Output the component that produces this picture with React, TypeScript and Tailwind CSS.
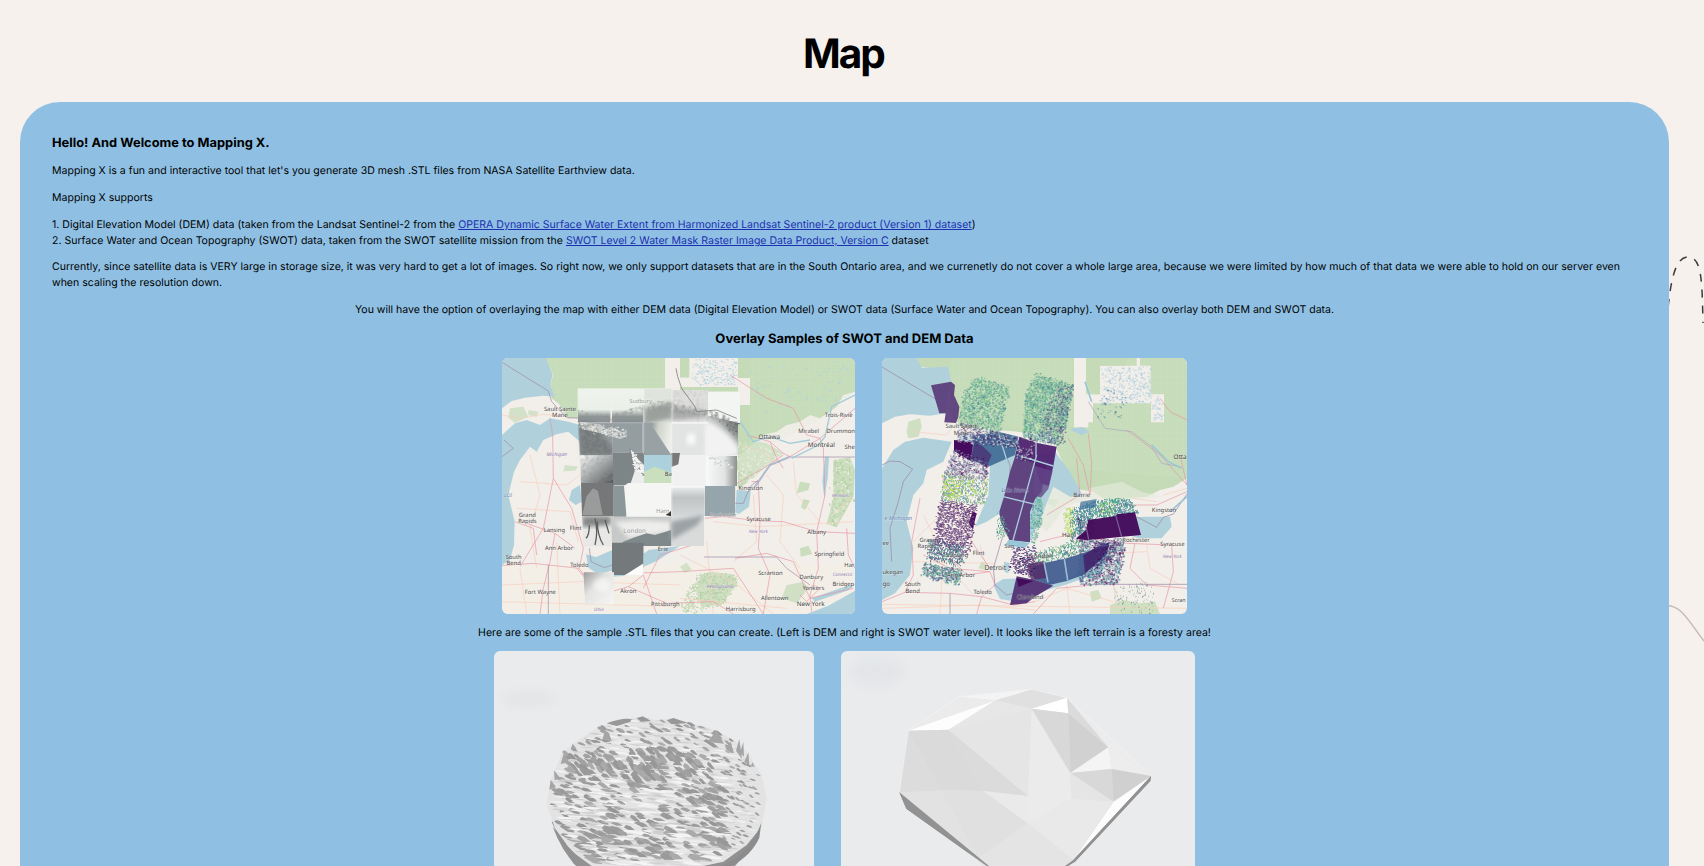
import React from "react";

type Pt = [number, number];

function rng(seed: number) {
  let s = seed;
  return () => {
    s = (s * 1664525 + 1013904223) % 4294967296;
    return s / 4294967296;
  };
}

const toPts = (s: string): Pt[] => s.split(" ").map((p) => p.split(",").map(Number) as Pt);

function inside(x: number, y: number, poly: Pt[]) {
  let hit = false;
  for (let i = 0, j = poly.length - 1; i < poly.length; j = i++) {
    const [xi, yi] = poly[i];
    const [xj, yj] = poly[j];
    if (yi > y !== yj > y && x < ((xj - xi) * (y - yi)) / (yj - yi) + xi) hit = !hit;
  }
  return hit;
}

/* Smooth pseudo-random field in the range -1..1. */
function field(x: number, y: number, f: number) {
  return (Math.sin(x * f + y * f * 0.6) + Math.sin(y * f * 1.7 - x * f * 0.5 + 1.3) + Math.sin((x + y) * f * 2.3 + 4)) / 3;
}

/* Scattered raster cells that fill a polygon with a given density. */
function Speckle({ area, colors, density, seed, size = 3 }: { area: string; colors: string[]; density: number; seed: number; size?: number }) {
  const poly = toPts(area);
  const xs = poly.map((p) => p[0]);
  const ys = poly.map((p) => p[1]);
  const r = rng(seed);
  const d: string[] = colors.map(() => "");
  for (let y = Math.min(...ys); y < Math.max(...ys); y += size) {
    for (let x = Math.min(...xs); x < Math.max(...xs); x += size) {
      const a = r();
      const b = r();
      const c = r();
      const jx = x + (r() - 0.5) * 9;
      const jy = y + (r() - 0.5) * 9;
      if (a < density * (1 + 0.3 * field(x, y, 0.07)) && inside(jx, jy, poly)) {
        const w = size * (b > 0.75 ? 1.8 : 1);
        const h = size * (c > 0.75 ? 1.8 : 1);
        d[Math.floor(b * 97) % colors.length] += `M${x} ${y}h${w}v${h}h${-w}z`;
      }
    }
  }
  return (
    <g opacity={0.8}>
      {d.map((p, i) => (
        <path key={i} d={p} fill={colors[i]} />
      ))}
    </g>
  );
}

type Label = [string, number, number, number?, string?];
function Labels({ items }: { items: Label[] }) {
  return (
    <g fontFamily="'Noto Sans', sans-serif" textAnchor="middle" stroke="#fff" strokeOpacity={0.35} strokeWidth={2.5} paintOrder="stroke">
      {items.map(([t, x, y, s, c]) => (
        <text key={t + x} x={x} y={y} fontSize={s ?? 17.5} fill={c ?? "#444"} fontStyle={c && c !== "#999" ? "italic" : "normal"}>
          {t}
        </text>
      ))}
    </g>
  );
}

function Roads({ major, minor }: { major: string[]; minor: string[] }) {
  return (
    <g fill="none" strokeLinejoin="round">
      {minor.map((p, i) => (
        <polyline key={i} points={p} stroke="#f7cfbd" strokeWidth={2} />
      ))}
      {major.map((p, i) => (
        <polyline key={i} points={p} stroke="#e892a2" strokeOpacity={0.75} strokeWidth={2.6} />
      ))}
    </g>
  );
}

const PURPLE = "#8d78ad";
const LAKE = "#6b87b8";

function DemMap() {
  return (
    <svg className="block h-[256px] w-[353px] rounded-md" viewBox="6 9 1059 768" preserveAspectRatio="none">
      <defs>
        <linearGradient id="dk" x1="0" y1="0" x2="1" y2="1"><stop offset="0" stopColor="#fbfbfb" /><stop offset=".5" stopColor="#a5a9aa" /><stop offset="1" stopColor="#505354" /></linearGradient>
        <linearGradient id="down" x1="0" y1="0" x2="0" y2="1"><stop offset="0" stopColor="#f1f2f2" /><stop offset=".4" stopColor="#bfc3c4" /><stop offset="1" stopColor="#d5d9da" /></linearGradient>
        <linearGradient id="side" x1="0" y1="0" x2="1" y2="0"><stop offset="0" stopColor="#f8f9f9" /><stop offset=".6" stopColor="#e1e4e3" /><stop offset="1" stopColor="#8b8f8e" /></linearGradient>
        <linearGradient id="sand" x1="0" y1="0" x2="1" y2="1"><stop offset="0" stopColor="#999" /><stop offset=".4" stopColor="#e3e3e2" /><stop offset="1" stopColor="#f6f6f4" /></linearGradient>
        <linearGradient id="band" x1="0" y1="0" x2="0" y2="1"><stop offset="0" stopColor="#eef3ec" /><stop offset=".6" stopColor="#eaf0e9" /><stop offset=".8" stopColor="#8e9595" /><stop offset="1" stopColor="#858d90" /></linearGradient>
        <linearGradient id="bay" x1="0" y1="0" x2="1" y2=".2"><stop offset=".3" stopColor="#98a1a3" /><stop offset=".55" stopColor="#cfd3cb" /><stop offset="1" stopColor="#eceee9" /></linearGradient>
        <linearGradient id="ne" x1="0" y1="1" x2="1" y2="0"><stop offset=".3" stopColor="#eeefee" /><stop offset=".6" stopColor="#b9bcbb" /><stop offset=".8" stopColor="#6f7372" /></linearGradient>
        <filter id="soft"><feGaussianBlur stdDeviation="6" /></filter>
        <filter id="grain" x="0" y="0" width="1" height="1"><feTurbulence type="fractalNoise" baseFrequency=".09" numOctaves="4" seed="4" /><feColorMatrix values="0 0 0 0 .3  0 0 0 0 .3  0 0 0 0 .3  1.8 0 0 0 -.72" /><feComposite in2="SourceGraphic" operator="in" /></filter>
        <pattern id="grid" width="7" height="7" patternUnits="userSpaceOnUse"><path d="M7 0H0V7" fill="none" stroke="#d5e4cb" strokeWidth="1" /></pattern>
        <clipPath id="tilesClip"><path d="M233 101H720V208H714V393H706V483H612V573H430V660H342V749H250V574L233 203z" /></clipPath>
      </defs>
      <path d="M6 9H1065V777H6z" fill="#f2eee9" />
      <path d="M6 630H1065V777H6z" fill="#f3efe5" opacity=".7" />
      <g fill="#c5dbb8">
        <path d="M135 9H568V68H540V100H233V190H205L178 148 155 130 150 90 160 60z" />
        <path d="M540 96H714V400L740 385 760 350 700 345 720 300 790 240 830 230 860 210 900 200 930 180 960 190 1010 155 1030 120 1065 110V9H714V69H750V150H720V110H540z" />
        <path d="M714 250L800 265 850 295 800 330 760 370 714 378z" opacity=".7" />
        <path d="M1000 315l50-8 15 40-5 80-50 90-30-10 20-80zM900 380l30 5-5 20-35 10zM910 432l20 5-15 28-12-8zM900 580l25-8 12 25-35 8z" opacity=".9" />
        <path d="M600 660l30-10 70 8 10 30-45 60-60 10-15-45zM860 690l50-10 15 20-35 45-45-15z" opacity=".75" />
        <path d="M195 330l40 5-10 12-35 2zM30 160l40-5 15 30-40 18-20-15zM540 635l20-12 15 20-20 12zM85 165l30 5-5 15-25-5z" opacity=".7" />
      </g>
      <Speckle area="1000,310 1050,305 1060,430 1010,520 975,505" colors={["#f2eee9", "#b3cfa4"]} density={0.22} seed={51} size={4} />
      <Speckle area="590,655 710,655 710,690 660,750 550,777 540,740" colors={["#b3cfa4", "#c5dbb8"]} density={0.35} seed={52} size={4} />
      <Speckle area="714,250 850,295 800,340 714,385" colors={["#f2eee9", "#d5e4c6"]} density={0.25} seed={53} size={4} />
      <path d="M135 9H495V190H200L150 100zM750 9H1065V110L950 200 750 300z" fill="url(#grid)" />
      <path d="M495 9H540V101H495zM540 68H570V96H540zM570 9H714V96H570zM714 69H750V150H714z" fill="#f2eee9" />
      <Speckle area="575,12 710,12 710,90 575,90" colors={["#aed0df", "#bdd8e3"]} density={0.22} seed={8} />
      <Speckle area="750,20 1060,20 1000,150 760,180" colors={["#aed3da"]} density={0.03} seed={18} size={4} />
      <g fill="#b0d1dc">
        <path d="M6 9H138L158 60 150 90 165 125 130 122 75 128 35 138 6 160z" />
        <path d="M6 240L45 205 80 195 120 210 150 190 205 200 240 210V260L205 230 170 238 130 255 110 290 90 275 60 315 42 350 25 420 44 500 42 570 30 615 6 630z" />
        <path d="M240 390l-25 15-8 30 20 15 18-10zM258 598l30 8 48-20 4 60-45 12-30-20zM336 665l110-80 94-12-70 45-100 45zM710 405l20 0 22 5-5 45-30 22-11-5zM975 305h12l-4 65-10 60-6-50zM920 777l65-25 80-45v70zM935 730l90-32 40-10-20 18-100 34z" />
      </g>
      <Roads
        minor={["6,180 60,190 130,178 200,185", "90,300 120,420 90,520 110,640", "60,380 200,390 240,360", "50,460 210,470", "640,500 780,515 1060,500", "760,420 770,560 700,620", "800,360 850,420 840,560 900,640", "880,320 890,420 960,500", "540,600 700,680 820,777", "6,690 240,680 540,690", "170,560 180,777", "60,640 80,777", "1000,480 1060,420", "620,560 640,777", "720,270 790,290 830,330", "210,470 235,560", "6,740 540,755", "540,730 860,760"]}
        major={["150,190 158,240 160,370 215,460 250,580 238,640", "160,370 130,520 60,635", "80,505 165,535 225,580", "6,632 100,625 238,640 250,660 540,650 700,640 790,777", "45,500 100,520 110,600", "165,535 150,620 130,700 120,777", "385,695 430,660 470,777", "385,695 300,720 230,640", "385,695 500,745 640,740 700,777", "430,700 480,600 612,560", "615,490 670,485 780,498 850,500 950,530 1065,535", "780,498 775,380 755,380", "780,498 775,580 810,660 790,777", "950,530 955,640 930,720 935,770", "950,530 975,420 970,280 960,250", "740,240 810,260 850,295 870,305 960,250 1065,160", "712,385 790,340 850,300", "690,60 800,130 880,160 920,240 960,250", "705,610 800,595 880,620 930,730 1060,700", "810,260 830,310 850,340", "900,720 920,740 960,700 940,690", "1040,520 1045,600 1065,640"]}
      />
      <g fill="none" stroke="#9b86a5" strokeWidth="3" opacity=".65">
        <path d="M6 22L145 108 155 140 200 188 260 190M6 305L40 280 12 255M868 306H1065M775 375L750 395 730 445H706M268 580l5 40 40 18 45-15 70-50M612 606H830L860 640 930 690M145 630V777" />
        <path d="M868 306L810 330 765 395" stroke="#8c9fc0" strokeWidth="6" />
      </g>
      <path d="M1065 120l-70 35-20 90-20 25-80 40M720 200l40 60 50-15 60 20 60-10" fill="none" stroke="#a1cbd9" strokeWidth="4" />

      <g clipPath="url(#tilesClip)">
        <path d="M233 101H331V203H233zM336 101H430V205H336z" fill="url(#band)" />
        <path d="M432 101H516V203H432z" fill="#dfe5dd" /><path d="M432 160l84-20v50l-84 20z" fill="#9ba09d" filter="url(#soft)" />
        <path d="M236 203H338V301H241z" fill="#969ea1" />
        <path d="M236 203h40l62 75v23H241z" fill="#707576" opacity=".85" filter="url(#soft)" />
        <path d="M338 203H430V293H338z" fill="#949da0" />
        <path d="M430 203H514V300H430z" fill="url(#bay)" /><path d="M430 203h20l64 97h-84z" fill="#98a1a4" />
        <path d="M241 301H339V384H243z" fill="url(#dk)" />
        <path d="M339 293H434V391H339z" fill="#7e8587" />
        <path d="M392 282l22 30 20 20v62h-45l15-45z" fill="#ececec" />
        <path d="M243 384H341V484H245z" fill="#757778" />
        <path d="M247 480l12-55 20-25 15 8 14 72z" fill="#a4a4a4" opacity=".8" />
        <path d="M340 392H380V485H341z" fill="#8c979a" />
        <path d="M372 392L385 384H516V490H380z" fill="#f5f6f3" />
        <path d="M247 484H333V574H247z" fill="#e8e8e7" /><path d="M247 484h86v25l-86 8z" fill="#848686" filter="url(#soft)" />
        <path d="M285 490q10 40 0 80M292 500q0 40 18 70M268 510q0 30-10 40M315 495l12 40" fill="none" stroke="#5c5e5e" strokeWidth="4" />
        <path d="M333 485H516V573H336z" fill="#c6c9c8" /><path d="M345 500l80-5 90 5v30l-130 20z" fill="#ededeb" filter="url(#soft)" />
        <path d="M338 592L370 560 400 548 440 535 465 540 514 525V573H432V600H336z" fill="#7f898c" />
        <path d="M336 563H431V640L375 660H336z" fill="#74797b" /><path d="M431 625V660H375z" fill="#fbfbfa" />
        <path d="M250 652H342V749H256z" fill="url(#sand)" />
        <ellipse cx="305" cy="690" rx="24" ry="20" fill="#fff" opacity=".5" filter="url(#soft)" />
        <path d="M516 105H624V205H516z" fill="#dfdfde" /><path d="M516 150l108 20v15l-108 10z" fill="#a9acab" filter="url(#soft)" />
        <path d="M624 110H720V208H624z" fill="#f2f5f1" />
        <path d="M516 205H624V300H516z" fill="#e2e3e3" />
        <ellipse cx="573" cy="252" rx="14" ry="18" fill="#fafafa" filter="url(#soft)" />
        <path d="M616 180L720 205V300H616z" fill="url(#ne)" />
        <path d="M616 200q50 10 98 75v25h-98z" fill="#f1f2f1" filter="url(#soft)" />
        <path d="M514 300H618V395H514z" fill="#f0f1f0" /><path d="M514 294h26l-5 34-21 8z" fill="#77797a" />
        <path d="M618 303H711V393H618z" fill="url(#side)" />
        <path d="M514 390H614V485H514z" fill="url(#down)" /><path d="M615 393H706V483H615z" fill="#95a5ab" />
        <path d="M514 484H612V573H514z" fill="#d9dbdb" /><path d="M514 500l98-20-20 30-78 45z" fill="#9ca2a5" filter="url(#soft)" />
        <path d="M432 300H514V384H432z" fill="#c9dfbd" /><path d="M432 300H514V352L490 345 465 335 432 350z" fill="#acd0dc" />
        <path d="M233 160q60 30 120 12t120-35q60 5 110 20t130 38v12q-60-22-130-28t-110-12-110 30-130-15z" fill="#4c5253" filter="url(#grain)" />
        <path d="M236 203H339V384H243z" fill="#555" filter="url(#grain)" opacity=".6" />
        <path d="M516 105H624V200H516z" fill="#777" filter="url(#grain)" opacity=".25" />
        <path d="M624 165q60 10 96 45v40q-40-50-96-60z" fill="#555" filter="url(#grain)" />
        <path d="M240 200l60 8 20 15 30-8 8 18 22-5v18l-20 6-60-18-55-12z" fill="#dde0dc" opacity=".7" />
        <Speckle area="235,203 380,220 375,250 290,235 235,215" colors={["#848a8a", "#f6f6f4"]} density={0.3} seed={5} />
        <Speckle area="385,282 410,300 432,360 405,350" colors={["#777d7d", "#fff"]} density={0.25} seed={6} />
        <Speckle area="655,190 720,205 712,240 675,225" colors={["#5d6160", "#8e9190"]} density={0.22} seed={7} />
        <Speckle area="620,305 680,310 700,340 640,325" colors={["#b8beba", "#fff"]} density={0.25} seed={9} />
        <path d="M516 203H624M512 395H614" stroke="#fff" strokeWidth="6" opacity=".6" />
      </g>
      <path d="M234 203H430M334 101V203M431 101V300M428 203V290M516 105V484" stroke="#fff" strokeWidth="4" opacity=".25" fill="none" />
      <path d="M528 40l5 25 12 35 40 55 5 15M590 170l60-5 60 25" stroke="#7e7a80" strokeWidth="3" fill="none" opacity=".8" />
      <path d="M497 480l16-12v16z" fill="#333" />
      <Labels
        items={[["Sault Sainte", 180, 168], ["Marie", 180, 186], ["Sudbury", 422, 144, 17, "#999"], ["Michigan", 170, 302, 15, PURPLE], ["Grand", 82, 487], ["Rapids", 82, 505], ["Lansing", 163, 530], ["Flint", 227, 524], ["Ann Arbor", 177, 586], ["South", 41, 613], ["Bend", 41, 631], ["Toledo", 238, 636], ["Fort Wayne", 121, 716], ["Akron", 385, 714], ["Pittsburgh", 496, 753], ["London", 404, 533, 19, "#999"], ["Erie", 489, 588], ["Ba", 505, 363], ["Ham", 488, 475, 18, "#999"], ["Ohio", 297, 769, 14, PURPLE], ["Ottawa", 808, 253, 19], ["Mirabel", 926, 234], ["Montréal", 964, 277, 19], ["Drummon", 1022, 234], ["Trois-Riviè", 1016, 186], ["She", 1049, 283], ["Kingston", 752, 404], ["Rochester", 670, 487, 17, "#999"], ["Syracuse", 776, 498], ["New York", 775, 535, 14, PURPLE], ["Albany", 950, 538], ["Vermont", 1022, 426, 14, PURPLE], ["Springfield", 988, 604], ["Har", 1048, 637], ["Connectic", 1028, 662, 14, PURPLE], ["Scranton", 811, 660], ["Danbury", 934, 673], ["Yonkers", 940, 705], ["Bridgep", 1030, 694], ["Allentown", 824, 736], ["New York", 932, 754, 19], ["Harrisburg", 722, 769], ["Pennsylvania", 661, 698, 14, PURPLE], ["LOI", 24, 427, 16, LAKE]]}
      />
    </svg>
  );
}

const GREENS = ["#3f9b8b", "#5fb58a", "#35798c", "#7cc488", "#6aa79c"];
const DARKS = ["#440154", "#4b2a6b", "#5c3d7c", "#3e4c84"];
const MIX = ["#440154", "#3b528b", "#21918c", "#4b2a6b", "#7e9aa6"];

function SwotMap() {
  return (
    <svg className="block h-[256px] w-[305px] rounded-md" viewBox="6 9 915 768" preserveAspectRatio="none">
      <path d="M6 9H921V777H6z" fill="#f2eee9" />
      <g fill="#c5dbb8">
        <path d="M110 9H921V370L880 395 840 405 800 425 740 430 700 450 640 410 575 400 560 350 530 280 520 240 465 235 240 215 215 170 205 45 120 35z" />
        <path d="M85 200l35-10 5 25-10 30-30 5-5-20zM630 710l25-5 10 25-30 10zM690 750l40-15 50 10 45-5 15 37H690zM505 430l30 5-10 20-20-8zM305 620l15 5-5 20-20-5z" opacity=".8" />
      </g>
      <path d="M210 9H921V370L560 340 465 235 215 170z" fill="url(#grid)" />
      <path d="M582 9H618V118H660V32H780V9H770V32H812V118H852V202H813V145H639V202H625V217H582z" fill="#f2eee9" />
      <path d="M618 9h120v23h-78v86h-25l-17-40z" fill="#c5dbb8" />
      <path d="M530 300L590 410 640 425 600 440 560 450 500 530 465 500V380l40-80z" fill="#e3e8da" opacity=".75" />
      <path d="M625 400l100-20 60 30 60 15-100 10-110 10z" fill="#e6ebdc" opacity=".6" />
      <g fill="#b0d1dc">
        <path d="M6 9H110L125 38 205 35 213 80 195 175 150 182 90 178 45 185 6 205z" />
        <path d="M6 340L40 285 75 260 130 248 215 260 190 320 140 345 130 385 100 420 80 500 100 580 90 660 45 715 6 735z" />
        <path d="M240 240L360 245 465 300 525 290 570 350 610 425 570 425 520 395 490 470 450 560 400 560 360 475 320 500 285 515 325 420 330 330 250 300z" />
        <path d="M340 690l30-18 50-2 10 40-20 30-50-8zM465 690l100-20 120-70-20 50-110 40-90 25zM700 490l100-5 70 0 5 30-30 35-70 0-60-20zM568 222l40-6 20 15-25 10z" />
        <path d="M372 620l18 5-5 30-12-5z" />
      </g>
      <Speckle area="662,35 810,35 810,118 840,120 850,200 815,200 810,145 662,145" colors={["#9cc6dc", "#b7d3e0"]} density={0.18} seed={21} />
      <Roads
        minor={["100,560 190,470 190,380", "100,620 340,625 345,640", "130,480 190,600 180,777", "300,570 320,640", "560,600 800,590", "800,570 810,640 900,690", "465,740 560,700 700,740", "850,420 921,400", "6,760 300,750 465,765", "210,640 280,720", "700,680 710,777", "760,430 830,440", "100,230 200,240 215,220", "560,690 570,777", "6,748 921,760"]}
        major={["120,430 95,560 100,660 75,712 6,740", "75,712 210,715 305,725 400,750 465,740", "185,360 250,520 295,590 330,640", "200,600 260,660 330,650 345,690 305,725", "130,600 210,640 330,650", "305,725 290,777", "590,310 600,420 500,480", "565,250 610,330 630,420", "625,235 635,325 630,420", "590,560 640,550 740,565 875,570", "765,565 750,640 800,690 921,700", "875,570 880,650 850,760", "740,225 840,300 921,390 900,300", "840,130 870,170 921,195", "700,450 830,450 921,410", "480,560 560,540 600,560", "460,777 530,700 640,690"]}
      />
      <g fill="none" stroke="#9b86a5" strokeWidth="3" opacity=".7">
        <path d="M6 36L205 155 225 190M355 245L390 330 390 470 340 640 345 690 380 720 465 700M6 330L30 318 60 320 98 342 70 380 55 440 30 520 35 620M770 485l60 32 20-30 30-10 41-60M600 688H921M210 715V777" />
        <path d="M625 140l50 80 80 10 60 45 30 50 55 10" stroke="#a9a7c2" />
      </g>
      <path d="M615 80l20 60M921 425L870 470M815 270l50 50 40 20" stroke="#9cc5d6" strokeWidth="5" fill="none" />
      <Speckle area="455,350 488,360 485,500 460,570 448,560" colors={GREENS} density={0.45} seed={17} />

      <path d="M153 91L213 80 225 90 222 120 238 155 235 185 228 204 193 202 197 175 178 175z" fill="#5e427d" opacity=".96" />
      <path d="M280 240L360 232 415 245 405 300 325 335 275 310z" fill="#3a648f" opacity=".85" />
      <path d="M222 255L280 262 272 318 222 288z" fill="#460b5f" /><path d="M284 262L310 275 335 300 320 335 272 312z" fill="#4a3f7c" />
      <path d="M405 305L468 315 500 330 484 410 465 432 450 470V562L388 555 362 500 358 470 372 425 390 350z" fill="#5f4480" />
      <path d="M405 305l13-60 50 18 62 12-10 58-14 60-26-10-18-60z" fill="#4f2270" opacity=".95" />
      <path d="M462 332l56 16-13 54-22 26-24-10z" fill="#64488a" opacity=".75" />
      <path d="M370 425L465 448M470 300L395 570M410 300l110 33M355 235l30 95M468 260v50" stroke="#a9cbdc" strokeWidth="4" fill="none" />
      <path d="M385 555l65 8-15 15-60-5z" fill="#96c6d8" />
      <path d="M278 470l12 5-12 48-12-20z" fill="#470c62" />

      <Speckle area="282,62 390,95 355,240 238,205 245,120" colors={GREENS} density={0.42} seed={1} />
      <Speckle area="465,55 580,90 555,205 530,265 425,250 435,120" colors={GREENS} density={0.52} seed={2} />
      <Speckle area="540,80 580,90 545,270 470,260 490,180" colors={["#4a3f7b", "#3b6b8b", "#8a7aa2"]} density={0.25} seed={31} />
      <Speckle area="235,200 300,215 415,250 410,320 460,310 440,220 465,250 460,280 230,262" colors={[...DARKS, "#d5e6cf", "#eeeeea"]} density={0.5} seed={3} />
      <Speckle area="222,280 325,320 325,375 190,360" colors={["#440154", "#55658f", "#8a94ae"]} density={0.45} seed={4} />
      <Speckle area="190,355 325,370 310,450 180,440" colors={["#8ed645", "#3a9a8d", "#8591ae", "#8b8bae", "#a5d07c"]} density={0.42} seed={11} />
      <Speckle area="195,365 240,360 245,425 185,430" colors={["#8ed645", "#c9e04a"]} density={0.22} seed={41} />
      <Speckle area="180,435 290,450 265,600 155,560" colors={["#4b1860", "#5b2b6b", "#75588a"]} density={0.5} seed={12} />
      <Speckle area="145,550 250,570 245,632 138,610" colors={["#3c4d82", "#2b7c8c", "#5aa393", "#584078"]} density={0.55} seed={13} />
      <Speckle area="128,622 245,645 235,690 122,662" colors={["#31827e", "#46a87d", "#3c4d82"]} density={0.55} seed={14} />
      <Speckle area="355,470 385,520 385,555 345,545" colors={GREENS} density={0.36} seed={15} />
      <Speckle area="398,575 465,570 475,640 465,665 385,640" colors={DARKS} density={0.35} seed={16} />
      <Speckle area="570,465 650,435 745,430 780,475 620,495 570,560" colors={["#41a77d", "#2d9b8e", "#2d708e", "#3b6e8c"]} density={0.52} seed={19} />
      <Speckle area="552,455 575,455 580,500 570,560 550,500" colors={["#dce63f", "#b5dd4b", "#8fc97c"]} density={0.45} seed={20} />
      <Speckle area="650,440 700,440 700,478 660,480" colors={["#7ad151", "#b5dd4b"]} density={0.2} seed={43} />
      <Speckle area="595,490 640,490 635,540 590,555" colors={MIX} density={0.5} seed={22} />
      <Speckle area="470,590 600,550 620,580 560,610 465,630" colors={["#3b9f87", "#5fb58a", "#3b6e8c", "#9cc08c"]} density={0.4} seed={23} />
      <Speckle area="600,550 735,550 725,640 710,685 600,690 590,650" colors={MIX} density={0.46} seed={24} />
      <Speckle area="690,690 810,680 830,777 720,777" colors={["#b8ceb0", "#8c99a5"]} density={0.1} seed={25} />
      <Speckle area="660,100 740,110 740,190 650,190" colors={["#3e7598", "#7da6b5"]} density={0.07} seed={26} />

      <path d="M602 440l48-8-5 25-48 8z" fill="#3b6e9a" opacity=".7" />
      <path d="M625 495L708 483 710 478 765 472 783 540 650 553 620 555 588 552 618 525z" fill="#430b5b" opacity=".97" />
      <path d="M708 484l17 62M618 515l8 38" stroke="#7a5a94" strokeWidth="4" />
      <path d="M410 664L465 675 520 692 465 725 440 745 390 750z" fill="#583a7a" />
      <path d="M410 670l50 8-45 18z" fill="#430b5b" />
      <path d="M490 625L560 610 622 590 690 560 680 600 610 660 560 678 508 690 465 675 450 640z" fill="#3f5a8e" opacity=".92" />
      <path d="M610 600L645 580 690 570 665 610 615 655z" fill="#45246c" opacity=".9" />
      <path d="M440 630l50-12 12 50-48 8z" fill="#542a66" opacity=".8" />
      <path d="M553 612l10 64M492 622l12 60" stroke="#94bdd4" strokeWidth="5" />
      <Speckle area="640,560 720,560 690,620 640,650" colors={["#440154", "#3e3a78"]} density={0.35} seed={61} />
      <Speckle area="400,610 465,600 460,660 400,655" colors={DARKS} density={0.3} seed={28} />

      <Labels
        items={[["Sault Sainte", 245, 220], ["Marie", 245, 239], ["Lake Huron", 405, 410, 16, "#51508f"], ["e Michigan", 55, 494, 17, LAKE], ["Grand", 144, 561], ["Rapids", 140, 580], ["Lansing", 232, 606], ["Flint", 296, 600], ["Detroit", 346, 644, 20], ["Ann Arbor", 243, 665], ["South", 98, 694], ["Bend", 98, 713], ["Toledo", 308, 717], ["ukegan", 38, 657], ["ee", 17, 570, 17], ["go", 19, 693, 19], ["Sag", 388, 580], ["London", 485, 608, 19], ["Cleveland", 450, 732], ["Barrie", 605, 427], ["Ham", 567, 547, 19], ["Kingston", 852, 472], ["Rochester", 768, 560], ["Syracuse", 877, 572], ["New York", 877, 610, 14, PURPLE], ["Otta", 900, 311, 19], ["Scran", 896, 742, 16]]}
      />
    </svg>
  );
}

const ROCK = "170,480 182,405 195,378 215,325 248,298 300,262 345,240 380,224 455,215 500,226 545,219 600,235 650,247 690,262 740,290 775,325 815,390 830,460 815,545 770,600 700,650 640,663 290,663 230,600 195,550";

function Shards() {
  const poly = toPts(ROCK);
  const r = rng(77);
  const dark = ["#9b9b9b", "#a1a1a1", "#979797", "#aaaaaa"];
  const pale = ["#ececec", "#f4f4f4", "#d9d9d9", "#cecece"];
  const out: React.ReactNode[] = [];
  for (let y = 222; y < 664; y += 12) {
    for (let x = 172; x < 832; x += 19) {
      const px = x + (r() - 0.5) * 20;
      const py = y + (r() - 0.5) * 12;
      const k = px > 700 ? 0.55 : 0.7 + ((py - 215) / 440) * 0.7;
      const ridge = Math.exp(-(((px - 440) / 170) ** 2) - ((py - 360) / 40) ** 2);
      const bowl = Math.exp(-(((px - 660) / 55) ** 2) - ((py - 460) / 50) ** 2);
      const side = Math.exp(-(((px - 260) / 60) ** 2) - ((py - 400) / 50) ** 2);
      const glow = Math.exp(-(((px - 480) / 160) ** 2) - ((py - 475) / 45) ** 2);
      const v = r() + 0.3 * field(px, py, 0.035);
      const isDark = v < 0.4 + ridge * 0.4 + bowl * 0.35 + side * 0.25 - glow * 0.15;
      const a = r();
      const b = r();
      const tall = ridge * 26;
      const w = (isDark ? 16 + a * 16 : 30 + a * 26) * k;
      const h = (isDark ? 10 + b * 12 + tall : 4 + b * 6) * k;
      const sk = (isDark ? 7 + b * 6 : 10) * k;
      const tone = isDark ? dark[Math.floor(r() * 4)] : pale[Math.floor(r() * 4)];
      if (!inside(px - w / 2, py, poly) || !inside(px + w / 2 + sk, py + h / 2, poly)) continue;
      out.push(
        <polygon
          key={`${x}-${y}`}
          points={`${px - w / 2},${py - h * 0.2} ${px - w / 4},${py - h / 2} ${px + w / 5},${py - h / 3} ${px + w / 2 + sk * 0.5},${py + h * 0.25} ${px + w / 3 + sk},${py + h / 2} ${px + sk * 0.4},${py + h * 0.4}`}
          fill={tone}
        />
      );
    }
  }
  return <g>{out}</g>;
}

function DemMesh() {
  return (
    <svg className="block h-[256px] w-[320px] rounded-md bg-[#e9ebed]" viewBox="12 18 960 768" preserveAspectRatio="none">
      <defs><filter id="haze" x="-50%" y="-100%" width="200%" height="300%"><feGaussianBlur stdDeviation="16" /></filter></defs>
      <ellipse cx="115" cy="162" rx="80" ry="22" fill="#dfe1e3" opacity=".7" filter="url(#haze)" />
      <path d="M185 530L220 610 250 655 320 720H650L735 663 790 600 818 520z" fill="#919191" />
      <polygon points={ROCK} fill="#e3e3e3" />
      <Shards />
      <g fill="#a5a5a5">
        <path d="M248 296l12 15-18 2zM222 322l15 30-25 5zM192 376l20 25-18 4zM182 404l16 22-20 8z" />
        <path d="M680 256l22 40-50-5zM722 290l10 35-16-3zM748 282l8 60-18-25zM760 290l2 45-12-12zM775 322l3 40-15-12zM788 352l6 14-12-3zM345 256l12 8 8 25-28-5zM705 305l18-15-5 30z" />
        <path d="M350 235q50-18 75-12l-5 8-40 12zM440 220l18-6 25 14-30 2zM530 226l20-7 45 15-50 4z" fill="#989898" />
      </g>
      <path d="M692 663q85-30 122-130l-6 45q-25 55-85 85z" fill="#8c8c8c" />
      <path d="M188 545l32 40 20 30 65 48H260q-45-45-72-118z" fill="#929292" />
    </svg>
  );
}

function SwotMesh() {
  const faces: [string, string][] = [
    ["220,257 372,155 592,133 696,158 948,393 835,470 715,645 640,720 500,720 420,640 193,442", "#e4e4e4"],
    ["220,257 372,155 482,166", "#ebebeb"],
    ["372,155 592,133 482,166", "#f4f4f4"],
    ["220,257 482,166 341,254", "#fdfdfd"],
    ["482,166 592,133 696,158 590,191", "#e0e0e0"],
    ["341,254 482,166 590,191", "#e7e7e7"],
    ["590,191 696,158 700,205", "#ffffff"],
    ["220,257 341,254 445,438 320,436 193,442", "#dadada"],
    ["220,257 320,436 193,442", "#dcdcdc"],
    ["341,254 579,453 445,438", "#dbdbdb"],
    ["341,254 590,191 579,453", "#e5e5e5"],
    ["590,191 706,384 710,462 579,535 579,453", "#ebebeb"],
    ["590,191 700,205 706,384", "#d8d8d8"],
    ["700,205 820,307 706,384", "#d1d1d1"],
    ["696,158 820,307 700,205", "#dbdbdb"],
    ["696,158 948,393 820,307", "#ececec"],
    ["820,307 830,372 706,384", "#f4f4f4"],
    ["820,307 948,393 830,372", "#ededed"],
    ["706,384 830,372 835,470", "#d8d8d8"],
    ["830,372 948,393 835,470", "#d0d0d0"],
    ["706,384 835,470 710,462", "#e5e5e5"],
    ["445,438 579,453 579,535", "#eaeaea"],
    ["193,442 320,436 430,640 420,640", "#e2e2e2"],
    ["320,436 445,438 575,535 430,640", "#e0e0e0"],
    ["579,535 710,462 835,470 715,645", "#e9e9e9"],
    ["835,470 948,393 715,645", "#fcfcfc"],
  ];
  return (
    <svg className="block h-[256px] w-[354px] rounded-md bg-[#e9ebed]" viewBox="18 18 1062 768" preserveAspectRatio="none">
      <ellipse cx="125" cy="80" rx="80" ry="40" fill="#dfe1e3" opacity=".6" filter="url(#haze)" />
      <path d="M193 442L214 491 455 663 640 700 692 663 720 650 946 408 948 393z" fill="#929292" />
      {faces.map(([p, c]) => (
        <polygon key={p} points={p} fill={c} />
      ))}
      <path d="M193 442L220 257 372 155 592 133 696 158 948 393" fill="none" stroke="#f4f4f4" strokeWidth="2" />
      <path d="M193 442L214 491 455 663H462z" fill="#929292" />
      <path d="M948 393L946 408 720 650 700 663H690L715 645z" fill="#929292" />
    </svg>
  );
}

const link = "text-[#1c2fae] underline";

export default function App() {
  return (
    <div className="relative h-[866px] overflow-hidden bg-[#f6f1ec] font-['Inter',sans-serif] text-black [text-rendering:geometricPrecision]">
      <svg className="absolute top-0 right-0 h-[866px] w-[44px]" viewBox="1660 0 44 866" fill="none">
        <path d="M1667 319C1670 285 1674 257 1688 257S1702 281 1703 323" stroke="#3c3c3c" strokeWidth="1.5" strokeDasharray="8 8" strokeDashoffset="4" />
        <path d="M1664 606C1681 603 1689 622 1704 641" stroke="#c7b9b7" strokeWidth="1.5" />
      </svg>
      <h1 className="h-[102px] w-[1689px] pt-[30px] pr-[2px] text-center text-[40.5px] leading-[48px] font-bold tracking-[-2px]">Map</h1>
      <main className="relative ml-5 h-[900px] w-[1649px] rounded-t-[40px] bg-[#8fc0e4] px-8 pt-[33px] text-[10.56px] leading-4">
        <h2 className="text-[12.87px] leading-[18px] font-bold">Hello! And Welcome to Mapping X.</h2>
        <p className="mt-[10px]">Mapping X is a fun and interactive tool that let's you generate 3D mesh .STL files from NASA Satellite Earthview data.</p>
        <p className="mt-[11px]">Mapping X supports</p>
        <ol className="mt-[11px]">
          <li>1. Digital Elevation Model (DEM) data (taken from the Landsat Sentinel-2 from the <a className={link}>OPERA Dynamic Surface Water Extent from Harmonized Landsat Sentinel-2 product (Version 1) dataset</a>)</li>
          <li>2. Surface Water and Ocean Topography (SWOT) data, taken from the SWOT satellite mission from the <a className={link}>SWOT Level 2 Water Mask Raster Image Data Product, Version C</a> dataset</li>
        </ol>
        <p className="mt-[10px] pr-4">Currently, since satellite data is VERY large in storage size, it was very hard to get a lot of images. So right now, we only support datasets that are in the South Ontario area, and we currenetly do not cover a whole large area, because we were limited by how much of that data we were able to hold on our server even when scaling the resolution down.</p>
        <p className="mt-[11px] text-center">You will have the option of overlaying the map with either DEM data (Digital Elevation Model) or SWOT data (Surface Water and Ocean Topography). You can also overlay both DEM and SWOT data.</p>
        <h2 className="mt-3 text-center text-[13px] leading-[18px] font-bold">Overlay Samples of SWOT and DEM Data</h2>
        <div className="mt-[10px] flex justify-center gap-[27px]">
          <DemMap />
          <SwotMap />
        </div>
        <p className="mt-[11px] text-center">Here are some of the sample .STL files that you can create. (Left is DEM and right is SWOT water level). It looks like the left terrain is a foresty area!</p>
        <div className="mt-[10px] flex justify-center gap-[27px]">
          <DemMesh />
          <SwotMesh />
        </div>
      </main>
    </div>
  );
}
